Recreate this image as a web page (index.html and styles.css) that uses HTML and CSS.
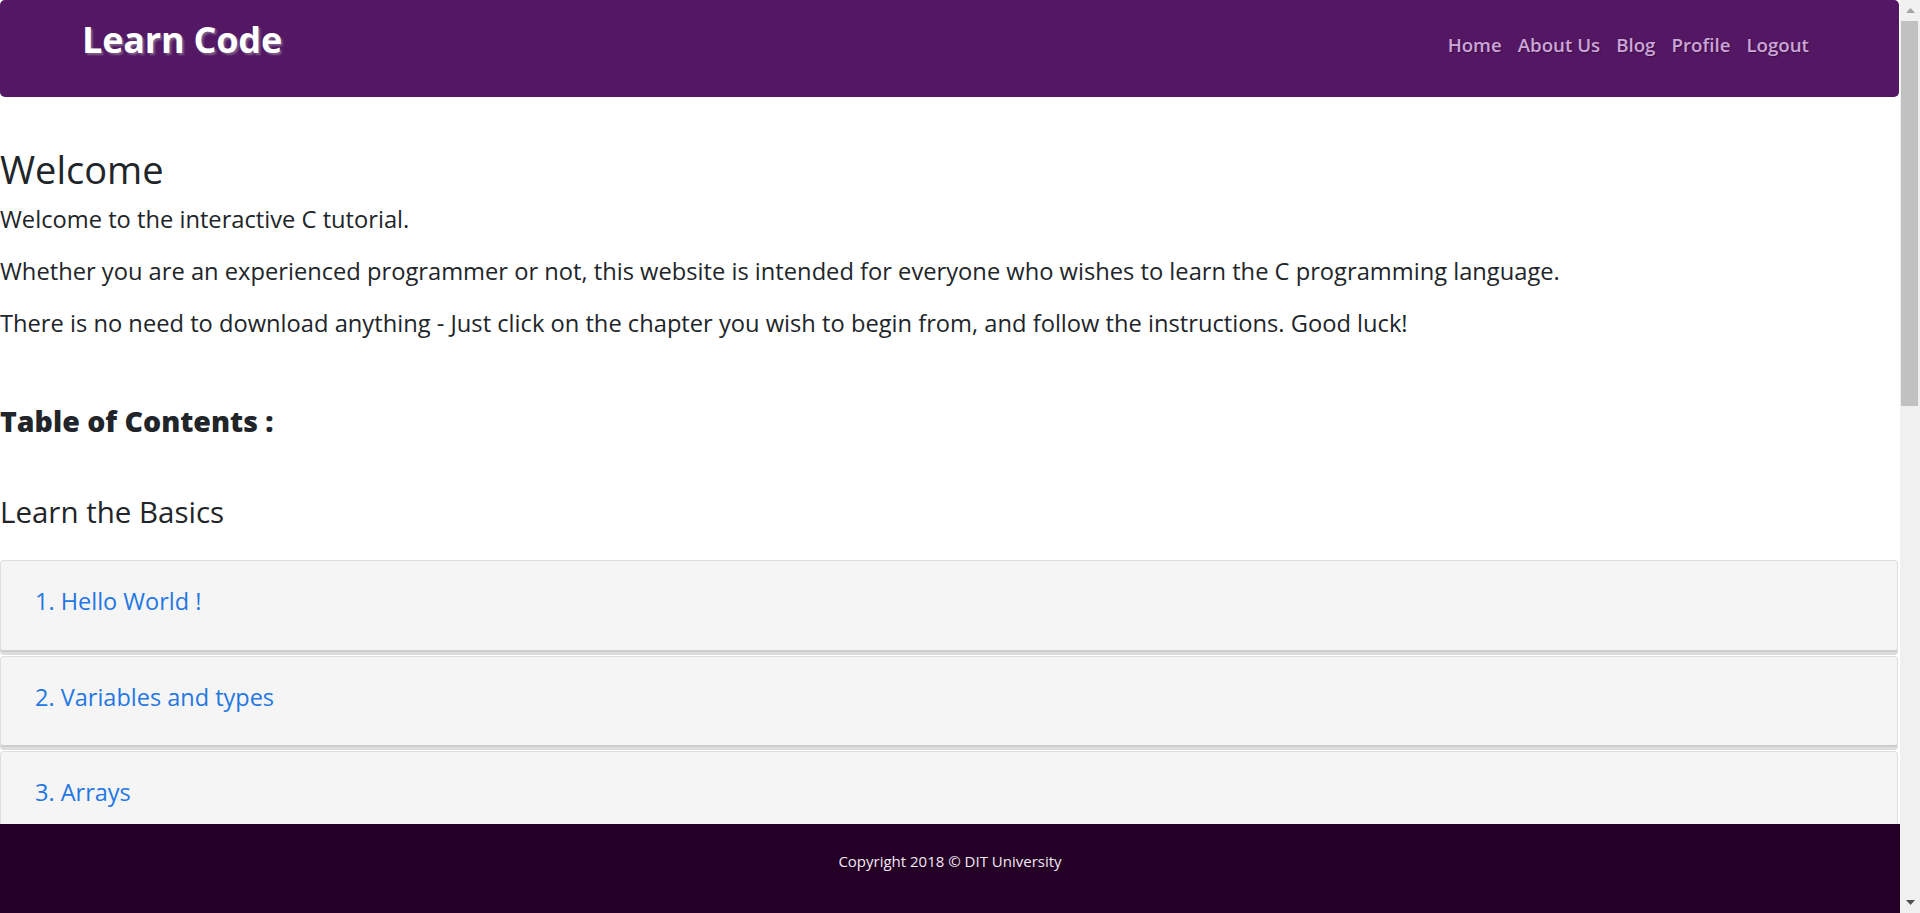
FILE: index.html
```html
<!DOCTYPE html>
<html lang="en">
<head>
<meta charset="utf-8">
<title>Learn Code</title>
<link rel="stylesheet" href="styles.css">
</head>
<body>
<div class="page">
  <nav class="navbar">
    <a class="brand" href="#">Learn Code</a>
    <ul class="nav-links">
      <li><a href="#">Home</a></li>
      <li><a href="#">About Us</a></li>
      <li><a href="#">Blog</a></li>
      <li><a href="#">Profile</a></li>
      <li><a href="#">Logout</a></li>
    </ul>
  </nav>

  <main class="content">
    <h1 class="title">Welcome</h1>
    <p>Welcome to the interactive C tutorial.</p>
    <p>Whether you are an experienced programmer or not, this website is intended for everyone who wishes to learn the C programming language.</p>
    <p>There is no need to download anything - Just click on the chapter you wish to begin from, and follow the instructions. Good luck!</p>

    <h3 class="toc"><b>Table of Contents :</b></h3>

    <h3 class="section">Learn the Basics</h3>
    <div class="chapters">
      <div class="chapter"><a href="#">1. Hello World !</a></div>
      <div class="chapter"><a href="#">2. Variables and types</a></div>
      <div class="chapter"><a href="#">3. Arrays</a></div>
    </div>
  </main>

  <footer class="footer">
    <p>Copyright 2018 &copy; DIT University</p>
  </footer>
</div>

<div class="scrollbar" aria-hidden="true">
  <div class="sb-button">
    <svg width="9" height="5" viewBox="0 0 9 5"><polygon points="0,5 9,5 4.5,0" fill="#a3a3a3"/></svg>
  </div>
  <div class="sb-track">
    <div class="sb-thumb"></div>
  </div>
  <div class="sb-button">
    <svg width="9" height="5" viewBox="0 0 9 5"><polygon points="0,0 9,0 4.5,5" fill="#505050"/></svg>
  </div>
</div>
</body>
</html>
```

FILE: styles.css
```css
html,
body {
  height: 100%;
}

body {
  margin: 0;
  display: flex;
  overflow: hidden;
  background: #ffffff;
  font-family: "Open Sans", "Noto Sans", sans-serif;
  color: #212529;
}

a {
  text-decoration: none;
}

.page {
  flex: 1;
  min-width: 0;
  display: flex;
  flex-direction: column;
}

/* Navbar */
.navbar {
  flex: none;
  display: flex;
  align-items: flex-start;
  justify-content: space-between;
  height: 97px;
  margin-right: 1px;
  padding: 0 90px 0 82px;
  box-sizing: border-box;
  background: #541763;
  border-radius: 5px;
}

.brand {
  color: #ffffff;
  font-size: 36px;
  font-weight: 700;
  line-height: 48px;
  padding-top: 16px;
  letter-spacing: -0.2px;
  text-shadow: 2px 2px 2px #7d5f89;
}

.nav-links {
  display: flex;
  gap: 16px;
  list-style: none;
  margin: 0;
  padding: 31px 0 0;
}

.nav-links a {
  color: #caa6d7;
  font-size: 18.7px;
  font-weight: 600;
  line-height: 28px;
  text-shadow: 1px 1px 1px #3b0d47;
}

/* Content */
.content {
  flex: 1;
  min-height: 0;
  overflow: hidden;
  padding-top: 49px;
}

.title {
  font-size: 38px;
  font-weight: 400;
  line-height: 46px;
  margin: 0 0 9px;
}

.content p {
  font-size: 23.7px;
  line-height: 36px;
  margin: 0 0 16px;
}

.toc {
  font-size: 28.5px;
  line-height: 36px;
  margin: 62px 0 0;
}

.section {
  font-size: 29.5px;
  font-weight: 400;
  line-height: 36px;
  margin: 55px 0 0;
}

.chapters {
  margin: 30px 2px 0 0;
}

.chapter {
  background: #f5f5f5;
  border: 1px solid #dedede;
  border-bottom: 2px solid #cdcdcd;
  border-radius: 4px;
  box-shadow: 0 3px 0 #dcdcdc;
  margin-bottom: 4px;
  padding: 22px 34px 30.5px;
}

.chapter a {
  color: #2377e3;
  font-size: 23.5px;
  line-height: 36px;
}

/* Footer */
.footer {
  flex: none;
  height: 89px;
  box-sizing: border-box;
  padding-top: 26px;
  background: #240026;
  text-align: center;
}

.footer p {
  margin: 0;
  color: #f3e9f3;
  font-size: 15px;
  line-height: 22px;
}

/* Scrollbar drawn beside the page */
.scrollbar {
  flex: none;
  width: 20px;
  display: flex;
  flex-direction: column;
  background: #f0f0f0;
}

.sb-button {
  flex: none;
  height: 21px;
  display: flex;
  align-items: center;
  justify-content: center;
}

.sb-track {
  flex: 1;
  padding: 0 2px 0 1px;
}

.sb-thumb {
  height: 385px;
  background: #c1c1c1;
}
```
